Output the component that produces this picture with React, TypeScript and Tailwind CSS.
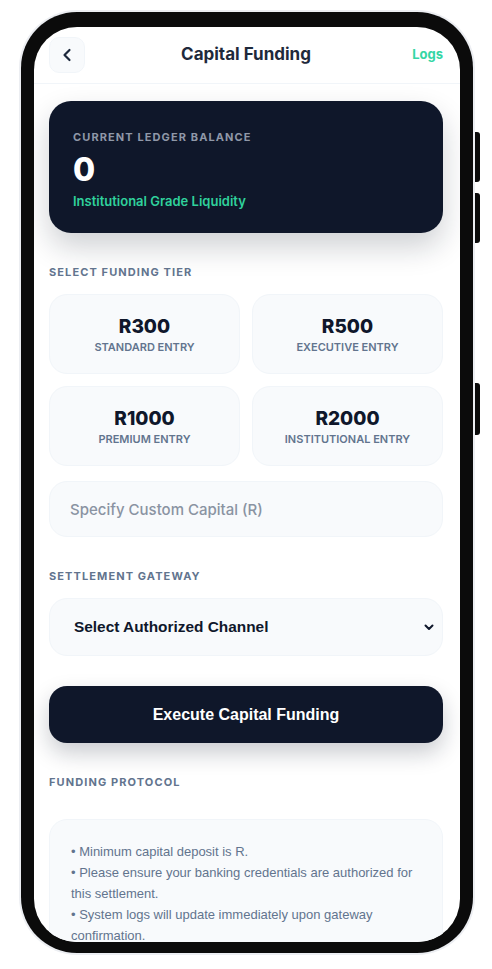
import React from "react";
import { ChevronLeft } from "lucide-react";

const tiers = [
  { amount: "R300", label: "STANDARD ENTRY" },
  { amount: "R500", label: "EXECUTIVE ENTRY" },
  { amount: "R1000", label: "PREMIUM ENTRY" },
  { amount: "R2000", label: "INSTITUTIONAL ENTRY" },
];

const protocol = [
  "Minimum capital deposit is R.",
  "Please ensure your banking credentials are authorized for this settlement.",
  "System logs will update immediately upon gateway confirmation.",
];

const SectionLabel: React.FC<{ children: React.ReactNode; className?: string }> = ({
  children,
  className = "",
}) => (
  <p className={`text-[11px] leading-4 font-bold tracking-[0.1em] text-slate-500 ${className}`}>
    {children}
  </p>
);

export default function App() {
  return (
    <div className="min-h-screen bg-white pl-[21px] pt-[12px] [font-family:Inter,sans-serif]">
      {/* device frame */}
      <div className="relative w-[452px] h-[941px] rounded-[56px] bg-[#0b0b0b] px-[13px] pt-[15px] pb-[11px] shadow-[0_0_0_2px_#eceef2]">
        <div className="absolute left-[454px] top-[120px] w-[5px] h-[50px] rounded-r-[3px] bg-[#0b0b0b]" />
        <div className="absolute left-[454px] top-[181px] w-[5px] h-[50px] rounded-r-[3px] bg-[#0b0b0b]" />
        <div className="absolute left-[454px] top-[371px] w-[5px] h-[52px] rounded-r-[3px] bg-[#0b0b0b]" />

        <div className="h-full w-full rounded-[43px] bg-white overflow-hidden flex flex-col">
          <header className="h-[57px] shrink-0 flex items-center pl-[15px] pr-[17px] border-b border-slate-100">
            <button className="w-9 h-9 rounded-[10px] bg-slate-50 border border-slate-100 flex items-center justify-center text-slate-800">
              <ChevronLeft size={20} strokeWidth={2.6} />
            </button>
            <h1 className="flex-1 text-center text-[17px] font-bold text-[#1e293b]">Capital Funding</h1>
            <span className="w-9 text-right text-[13px] font-bold text-[#34d6a4]">Logs</span>
          </header>

          <main className="flex-1 overflow-hidden pl-[15px] pr-[17px] pt-[17px]">
            <div className="h-[132px] rounded-[22px] bg-[#0f172a] px-6 pt-[28px] shadow-[0_14px_30px_rgba(15,23,42,0.2)]">
              <p className="text-[11px] leading-4 font-bold tracking-[0.1em] text-[#8f98a8]">
                CURRENT LEDGER BALANCE
              </p>
              <p className="mt-[7px] text-[32px] leading-9 font-extrabold text-white">0</p>
              <p className="mt-[3px] text-[13px] leading-5 font-semibold text-[#2fd19c]">
                Institutional Grade Liquidity
              </p>
            </div>

            <SectionLabel className="mt-[31px]">SELECT FUNDING TIER</SectionLabel>
            <div className="mt-[14px] grid grid-cols-2 gap-3">
              {tiers.map((t) => (
                <div
                  key={t.amount}
                  className="h-[80px] rounded-[18px] bg-slate-50 border border-slate-100 flex flex-col items-center justify-center"
                >
                  <span className="text-[19px] leading-6 font-extrabold text-slate-900">{t.amount}</span>
                  <span className="mt-[1px] text-[11px] leading-[14px] font-semibold text-slate-500">
                    {t.label}
                  </span>
                </div>
              ))}
            </div>

            <input
              className="mt-[15px] h-[56px] w-full rounded-[18px] bg-slate-50 border border-slate-100 px-5 text-[15px] font-medium text-slate-900 placeholder:text-[#8a93a2] outline-none"
              placeholder="Specify Custom Capital (R)"
            />

            <SectionLabel className="mt-[31px]">SETTLEMENT GATEWAY</SectionLabel>
            <div className="mt-[14px] h-[58px] rounded-[18px] bg-slate-50 border border-slate-100 pl-6 pr-[8px] flex items-center justify-between">
              <span className="text-[15.4px] font-bold text-slate-900 [font-family:'Liberation_Sans',Arial,sans-serif]">
                Select Authorized Channel
              </span>
              <svg width="10" height="7" viewBox="0 0 10 7" fill="none" className="text-slate-900">
                <path d="M1.5 1.5L5 5L8.5 1.5" stroke="currentColor" strokeWidth="2" strokeLinecap="round" strokeLinejoin="round" />
              </svg>
            </div>

            <button className="mt-[30px] h-[57px] w-full rounded-[18px] bg-[#0f172a] text-white text-[16px] font-bold [font-family:'Liberation_Sans',Arial,sans-serif] shadow-[0_10px_22px_rgba(15,23,42,0.22)]">
              Execute Capital Funding
            </button>

            <SectionLabel className="mt-[31px]">FUNDING PROTOCOL</SectionLabel>
            <div className="mt-[29px] rounded-[18px] bg-slate-50 border border-slate-100 px-[21px] pt-[21px] pb-6 text-[13px] leading-[21px] text-slate-500 [font-family:'Liberation_Sans',Arial,sans-serif]">
              {protocol.map((line) => (
                <p key={line}>• {line}</p>
              ))}
            </div>
          </main>
        </div>
      </div>
    </div>
  );
}
